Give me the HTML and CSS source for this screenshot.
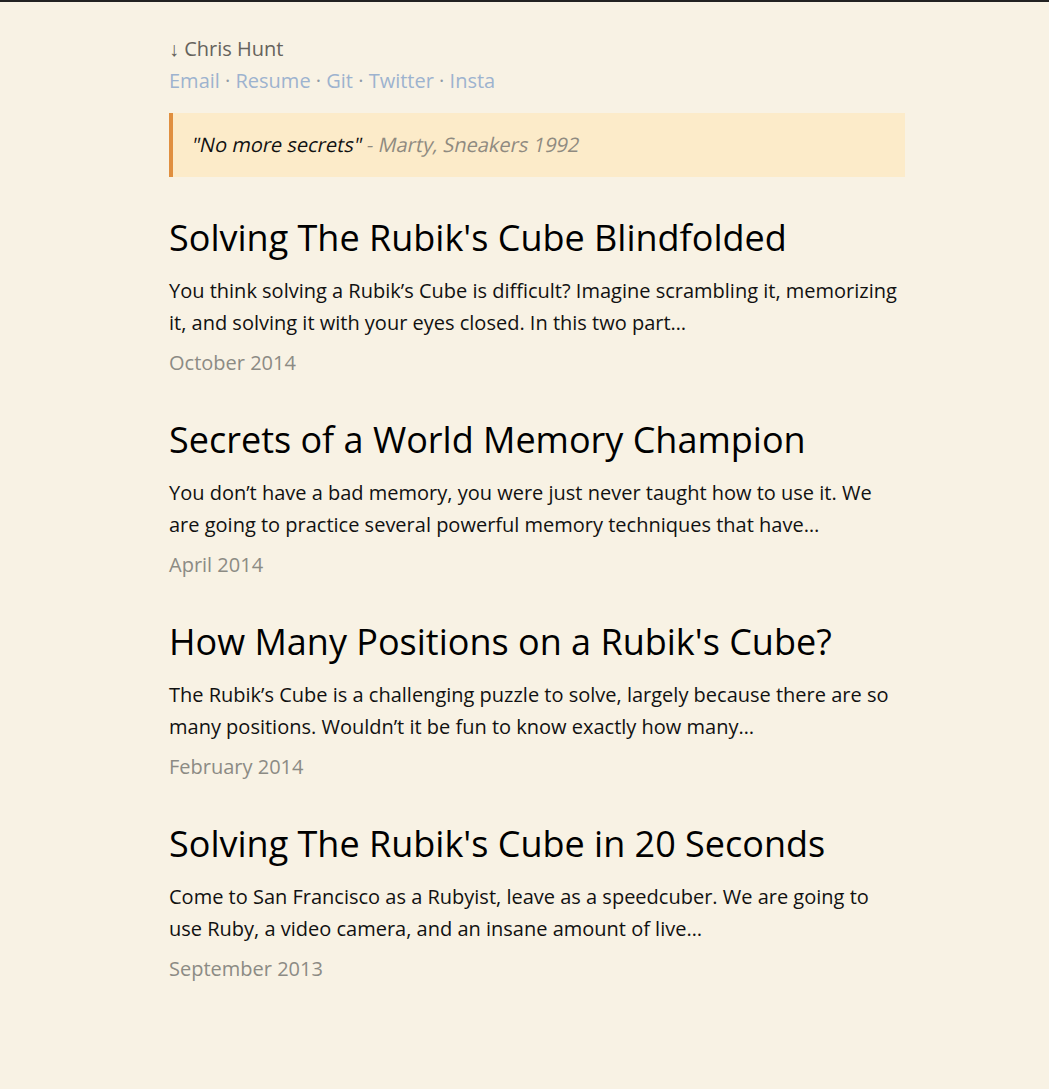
FILE: index.html
```html
<!DOCTYPE html>
<html>
<head>
<meta charset="utf-8">
<link rel="stylesheet" href="styles.css">
</head>
<body>
<div class="page">
  <header class="header">
    <div class="name">↓ Chris Hunt</div>
    <nav class="links">
      <a href="#">Email</a> · <a href="#">Resume</a> · <a href="#">Git</a> · <a href="#">Twitter</a> · <a href="#">Insta</a>
    </nav>
  </header>
  <blockquote class="quote">
    <span class="quote-inner"><span class="quote-text">"No more secrets"</span> <span class="quote-src">- Marty, Sneakers 1992</span></span>
  </blockquote>
  <main class="posts">
    <article class="post">
      <h2 class="post-title">Solving The Rubik's Cube Blindfolded</h2>
      <p class="post-excerpt">You think solving a Rubik’s Cube is difficult? Imagine scrambling it, memorizing it, and solving it with your eyes closed. In this two part…</p>
      <div class="post-date">October 2014</div>
    </article>
    <article class="post">
      <h2 class="post-title">Secrets of a World Memory Champion</h2>
      <p class="post-excerpt">You don’t have a bad memory, you were just never taught how to use it. We are going to practice several powerful memory techniques that have…</p>
      <div class="post-date">April 2014</div>
    </article>
    <article class="post">
      <h2 class="post-title">How Many Positions on a Rubik's Cube?</h2>
      <p class="post-excerpt">The Rubik’s Cube is a challenging puzzle to solve, largely because there are so many positions. Wouldn’t it be fun to know exactly how many…</p>
      <div class="post-date">February 2014</div>
    </article>
    <article class="post">
      <h2 class="post-title">Solving The Rubik's Cube in 20 Seconds</h2>
      <p class="post-excerpt">Come to San Francisco as a Rubyist, leave as a speedcuber. We are going to use Ruby, a video camera, and an insane amount of live…</p>
      <div class="post-date">September 2013</div>
    </article>
  </main>
</div>
</body>
</html>
```
FILE: styles.css
```css
html, body {
  margin: 0;
  padding: 0;
}
body {
  background: #f8f2e4;
  border-top: 2px solid #222;
  font-family: "Open Sans", "Noto Sans", sans-serif;
  font-size: 20px;
  line-height: 32px;
  color: #111;
}
.page {
  width: 736px;
  margin-left: 169px;
  padding-top: 31px;
}
.name {
  color: #66635c;
}
.links {
  color: #8f9aa6;
}
.links a {
  color: #9db3cf;
  text-decoration: none;
}
.quote {
  margin: 16px 0 0 0;
  background: #fcebc9;
  border-left: 4px solid #e08f3f;
  padding: 16px 18px;
  font-size: 20px;
}
.quote-inner {
  display: inline-block;
  transform: skewX(-12deg);
  transform-origin: 0 70%;
}
.quote-text {
  color: #111;
}
.quote-src {
  color: #8f8a80;
}
.posts {
  margin-top: 36px;
}
.post {
  margin-bottom: 36px;
}
.post-title {
  margin: 0;
  font-size: 36px;
  font-weight: 400;
  line-height: 50px;
  color: #000;
}
.post-excerpt {
  margin: 12px 0 0 0;
}
.post-date {
  margin-top: 8px;
  color: #8c8b84;
}
```
